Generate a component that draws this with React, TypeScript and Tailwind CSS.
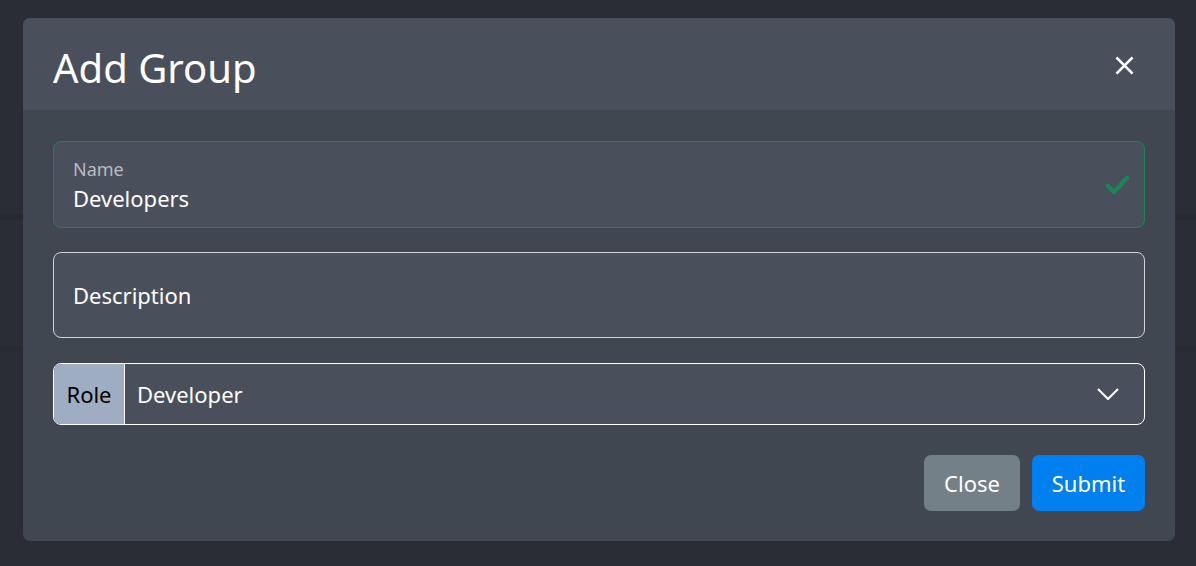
import React from 'react';

export default function App() {
  return (
    <div
      className="relative h-[566px] w-full overflow-hidden bg-[#2a2d35]"
      style={{ fontFamily: '"Noto Sans", "Open Sans", sans-serif' }}
    >
      {/* page behind the backdrop */}
      <div className="absolute inset-x-0 top-[214px] h-[6px] bg-[#272a30]" />
      <div className="absolute inset-x-0 top-[346px] h-[6px] bg-[#272a30]" />

      {/* modal */}
      <div className="relative ml-[23px] mt-[18px] h-[523px] w-[1152px] overflow-hidden rounded-[7px] bg-[#414750]">
        <div className="flex h-[92px] items-center justify-between bg-[#4a505b] pl-[30px] pr-[41px]">
          <h1 className="mt-[7px] text-[40px] leading-none text-white">Add Group</h1>
          <button className="mt-[3px] text-white">
            <svg width="19" height="19" viewBox="0 0 16 16" fill="none" stroke="currentColor" strokeWidth="2.2" strokeLinecap="square">
              <path d="M2 2L14 14M14 2L2 14" />
            </svg>
          </button>
        </div>

        <div className="flex flex-col gap-[24px] px-[30px] pt-[31px]">
          {/* Name */}
          <div className="relative flex h-[87px] flex-col justify-center rounded-[8px] border border-[#198754] bg-[#4a505b] px-[19px]">
            <label className="text-[18px] leading-none text-[#b7bbc2]">Name</label>
            <div className="mt-[9px] text-[22px] leading-none text-white">Developers</div>
            <svg className="absolute right-[13px] top-[32px]" width="26" height="22" viewBox="0 0 26 22" fill="none" stroke="#198754" strokeWidth="4.5" strokeLinecap="round" strokeLinejoin="round">
              <path d="M3 12L9 18L22 4" />
            </svg>
          </div>

          {/* Description */}
          <div className="flex h-[86px] items-center rounded-[8px] border border-[#d0d3d8] bg-[#4a505b] px-[19px]">
            <span className="text-[22px] text-white">Description</span>
          </div>

          {/* Role */}
          <div className="mt-[1px] flex h-[62px] overflow-hidden rounded-[8px] border border-white bg-[#4a505b]">
            <div className="flex w-[71px] items-center justify-center border-r border-white bg-[#9eadc2] text-[22px] text-black">
              Role
            </div>
            <div className="flex flex-1 items-center justify-between pl-[12px] pr-[25px]">
              <span className="text-[22px] text-white">Developer</span>
              <svg width="22" height="12" viewBox="0 0 22 12" fill="none" stroke="white" strokeWidth="2">
                <path d="M1 1L11 11L21 1" />
              </svg>
            </div>
          </div>

          {/* Footer */}
          <div className="mt-[6px] flex justify-end gap-[12px]">
            <button className="h-[56px] w-[96px] rounded-[7px] bg-[#738088] text-[22px] text-white">Close</button>
            <button className="h-[56px] w-[113px] rounded-[7px] bg-[#0080ee] text-[22px] text-white">Submit</button>
          </div>
        </div>
      </div>
    </div>
  );
}
